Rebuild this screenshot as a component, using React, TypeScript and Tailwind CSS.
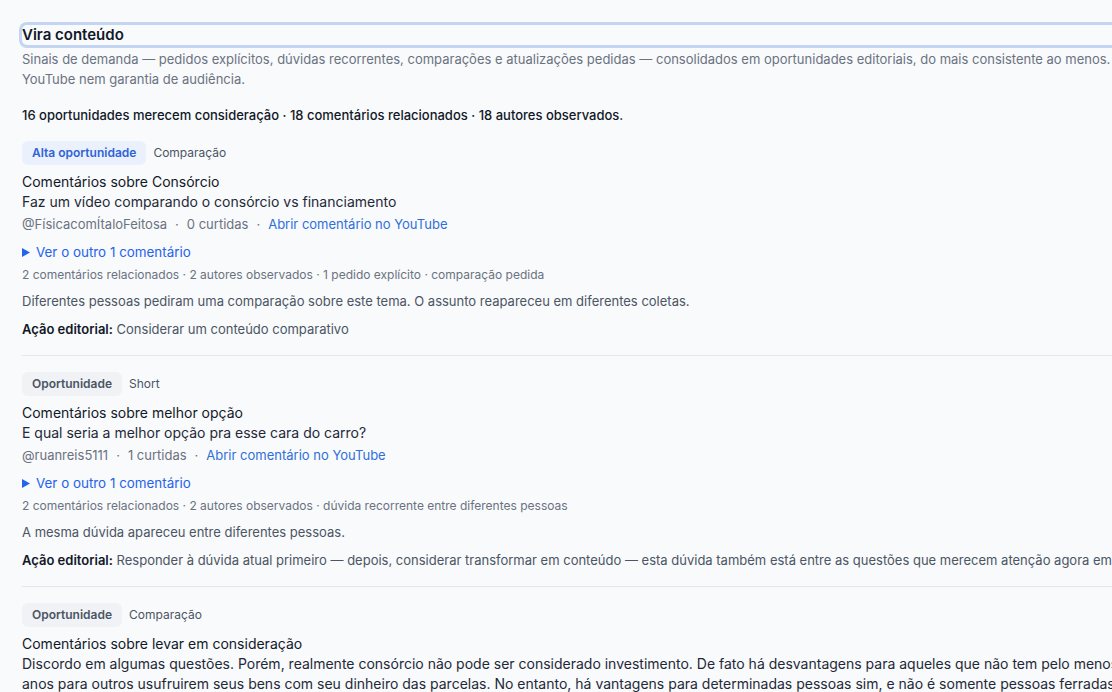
import React from 'react'

interface Opportunity {
  level:    'alta' | 'normal'
  format:   string
  title:    string
  comment:  string
  author?:  string
  likes?:   number
  others?:  number
  stats?:   string
  reason?:  string
  action?:  string
}

const ITEMS: Opportunity[] = [
  {
    level:   'alta',
    format:  'Comparação',
    title:   'Comentários sobre Consórcio',
    comment: 'Faz um vídeo comparando o consórcio vs financiamento',
    author:  '@FísicacomÍtaloFeitosa',
    likes:   0,
    others:  1,
    stats:   '2 comentários relacionados · 2 autores observados · 1 pedido explícito · comparação pedida',
    reason:  'Diferentes pessoas pediram uma comparação sobre este tema. O assunto reapareceu em diferentes coletas.',
    action:  'Considerar um conteúdo comparativo',
  },
  {
    level:   'normal',
    format:  'Short',
    title:   'Comentários sobre melhor opção',
    comment: 'E qual seria a melhor opção pra esse cara do carro?',
    author:  '@ruanreis5111',
    likes:   1,
    others:  1,
    stats:   '2 comentários relacionados · 2 autores observados · dúvida recorrente entre diferentes pessoas',
    reason:  'A mesma dúvida apareceu entre diferentes pessoas.',
    action:  'Responder à dúvida atual primeiro — depois, considerar transformar em conteúdo — esta dúvida também está entre as questões que merecem atenção agora em Responder.',
  },
  {
    level:   'normal',
    format:  'Comparação',
    title:   'Comentários sobre levar em consideração',
    // comment keeps the author's own line break
    comment: 'Discordo em algumas questões. Porém, realmente consórcio não pode ser considerado investimento. De fato há desvantagens para aqueles que não tem pelo menos sorte e esperam\nanos para outros usufruirem seus bens com seu dinheiro das parcelas. No entanto, há vantagens para determinadas pessoas sim, e não é somente pessoas ferradas que entram em consórcio.',
    author:  '@marcoslima',
    likes:   2,
    others:  1,
    stats:   '2 comentários relacionados · 2 autores observados · comparação pedida',
    reason:  'Diferentes pessoas trouxeram o mesmo ponto.',
    action:  'Considerar um conteúdo comparativo',
  },
]

function Dot() {
  return <span className="mx-2 text-[#6b7280]">·</span>
}

function Card({ item }: { item: Opportunity }) {
  return (
    <div className="border-b border-[#e5e7eb] pb-4 pt-4 first:pt-0">
      <div className="flex items-center gap-[7px]">
        {item.level === 'alta' ? (
          <span className="rounded-md bg-[#eaf1fd] px-2.5 h-6 flex items-center text-[12px] font-semibold text-[#2f63d6]">
            Alta oportunidade
          </span>
        ) : (
          <span className="rounded-md bg-[#f0f2f5] px-2.5 h-6 flex items-center text-[12px] font-semibold text-[#4b5563]">
            Oportunidade
          </span>
        )}
        <span className="text-[12px] text-[#4b5563]">{item.format}</span>
      </div>

      <p className="mt-[7px] text-[14px] leading-5 text-[#111827]">{item.title}</p>
      <p className="text-[14px] leading-5 text-[#1f2937] whitespace-pre-line">{item.comment}</p>

      <p className="mt-0.5 text-[13px] leading-5 text-[#6b7280]">
        {item.author}
        <Dot />
        {item.likes} curtidas
        <Dot />
        <a className="text-[#2f6fd8]">Abrir comentário no YouTube</a>
      </p>

      <div className="mt-2 flex items-center gap-[6px] text-[13.4px] leading-5 text-[#2563eb]">
        <svg width="8" height="9" viewBox="0 0 8 9" className="fill-[#2563eb]">
          <path d="M0 0 L8 4.5 L0 9 Z" />
        </svg>
        Ver o outro {item.others} comentário
      </div>

      <p className="mt-[5px] text-[12px] leading-4 text-[#6b7280]">{item.stats}</p>
      <p className="mt-2 text-[13px] leading-5 text-[#4b5563]">{item.reason}</p>
      <p className="mt-2 text-[13px] leading-5 text-[#4b5563]">
        <span className="font-semibold text-[#111827]">Ação editorial:</span> {item.action}
      </p>
    </div>
  )
}

export default function App() {
  return (
    <div className="h-screen w-screen overflow-hidden bg-[#f8fafc] font-['Inter',sans-serif]">
      <div className="w-[1340px] ml-[22px] pt-[25px]">
        <h2 className="rounded-[5px] ring-[3px] ring-[#c3d5f3] text-[15px] leading-5 font-semibold text-[#111827]">
          Vira conteúdo
        </h2>
        <p className="mt-[5px] text-[13px] leading-[19.5px] text-[#6b7280]">
          Sinais de demanda — pedidos explícitos, dúvidas recorrentes, comparações e atualizações pedidas — consolidados em oportunidades editoriais, do mais consistente ao menos. Não é uma previsão do algoritmo do YouTube nem garantia de audiência.
        </p>
        <p className="mt-4 text-[13px] leading-5 font-medium text-[#111827]">
          16 oportunidades merecem consideração · 18 comentários relacionados · 18 autores observados.
        </p>

        <div className="mt-4">
          {ITEMS.map((it, i) => <Card key={i} item={it} />)}
        </div>
      </div>
    </div>
  )
}
